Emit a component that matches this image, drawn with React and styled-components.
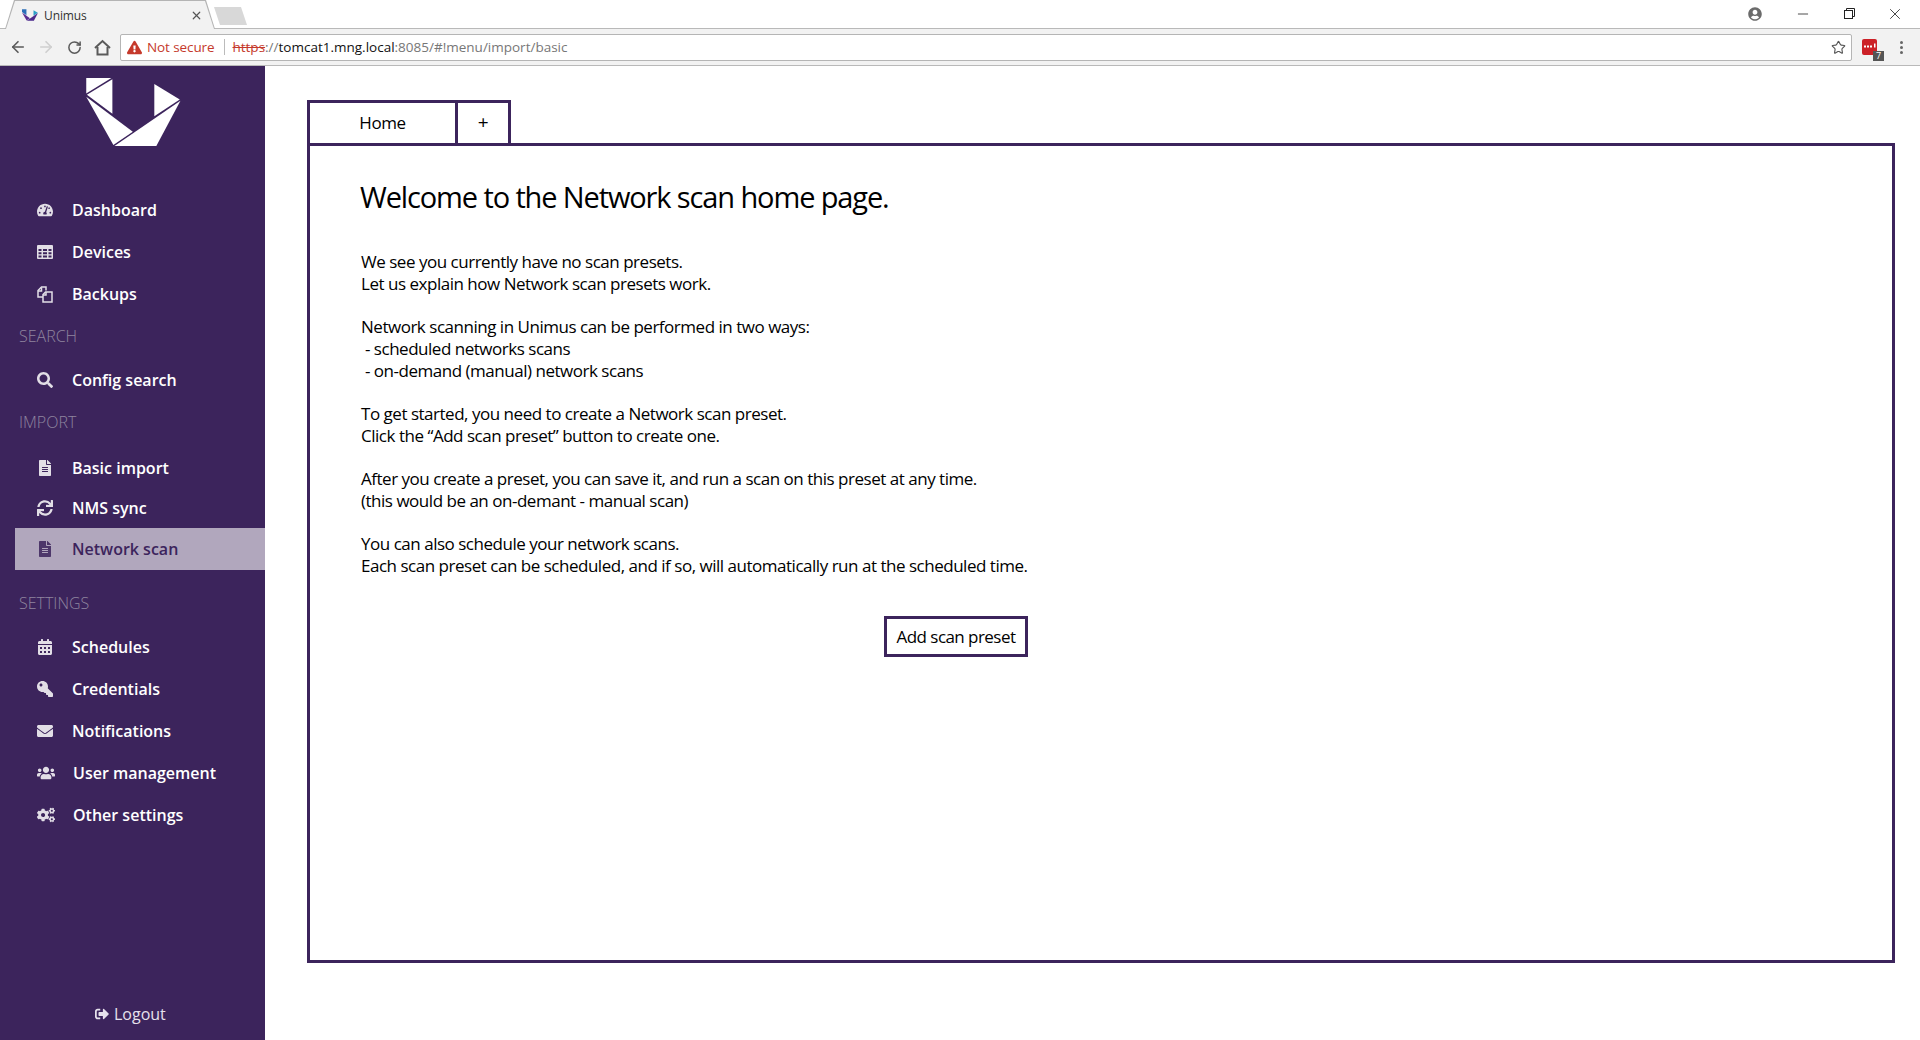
import styled, { createGlobalStyle } from 'styled-components';
import {
  FaTachometerAlt, FaSearch, FaFileAlt, FaSync, FaCalendarAlt,
  FaKey, FaEnvelope, FaUsers, FaCogs, FaSignOutAlt, FaExclamationTriangle, FaUserCircle,
} from 'react-icons/fa';
import { ArrowLeft, ArrowRight, RotateCw, Star, X, Minus } from 'lucide-react';

const purple = '#3c245c';

const GlobalStyle = createGlobalStyle`
  html, body { margin: 0; padding: 0; height: 100%; background: #fff; overflow: hidden; }
  * { box-sizing: border-box; }
  body { font-family: "Open Sans", "Liberation Sans", sans-serif; color: #000; }
`;

function Logo({ size = 95 }) {
  return (
    <svg width={size} height={size * 0.72} viewBox="79 54 282 204" fill="#fff">
      <polygon points="79,54 154,54 79,100" />
      <polygon points="157,58 157,161 81,104" />
      <polygon points="79,110 218,214 160,254" />
      <polygon points="282,72 358,118 282,168" />
      <polygon points="360,122 288,257 163,257" />
    </svg>
  );
}

function Favicon() {
  return (
    <svg width="16" height="12" viewBox="79 54 282 204">
      <polygon fill="#2b6fb8" points="79,54 157,54 157,161 79,104" />
      <polygon fill="#5a2d91" points="79,110 218,214 160,254" />
      <polygon fill="#2ba0c8" points="282,72 358,118 282,168" />
      <polygon fill="#4b2a8c" points="360,122 288,257 163,257" />
    </svg>
  );
}

function TableIcon() {
  return (
    <svg width="16" height="14" viewBox="0 0 16 14" fill="currentColor">
      <path fillRule="evenodd" d="M1 0h14a1 1 0 0 1 1 1v12a1 1 0 0 1-1 1H1a1 1 0 0 1-1-1V1a1 1 0 0 1 1-1zM1.5 4v2h3V4zm4.5 0v2h4V4zm5.500 0v2h3V4zM1.500 7.200v2h3v-2zm4.500 0v2h4v-2zm5.500 0v2h3v-2zM1.500 10.400v2h3v-2zm4.500 0v2h4v-2zm5.500 0v2h3v-2z" />
    </svg>
  );
}

function FilesIcon() {
  return (
    <svg width="16" height="17" viewBox="0 0 16 17" fill="none" stroke="currentColor" strokeWidth="1.5">
      <path d="M9 4.500V1H4.500L1 4.500V11H6" />
      <path d="M1 5H4.500V1.500" />
      <path d="M15 7V16H6V8.500L8.500 6H15Z" />
      <path d="M6 9H9V6" />
    </svg>
  );
}

function KeyIcon() {
  return <FlippedKey size={16} />;
}

function ExtensionGlyph() {
  return (
    <svg width="15" height="16" viewBox="0 0 15 16">
      <rect width="15" height="16" rx="2" fill="#cc2127" />
      <rect x="2" y="6.500" width="2" height="2" fill="#fff" />
      <rect x="5" y="6.500" width="2" height="2" fill="#fff" />
      <rect x="8" y="6.500" width="2" height="2" fill="#fff" />
      <rect x="12" y="4.500" width="1.500" height="4" fill="#fff" />
    </svg>
  );
}

function HomeGlyph() {
  return (
    <svg width="17" height="17" viewBox="0 0 17 17" fill="none" stroke="#5a5a5a" strokeWidth="2">
      <path d="M1 9L8.500 2L16 9" />
      <path d="M3.500 8V15.500H13.500V8" />
    </svg>
  );
}

const sections = [
  { items: [
    { icon: FaTachometerAlt, label: 'Dashboard' },
    { icon: TableIcon, label: 'Devices' },
    { icon: FilesIcon, label: 'Backups' },
  ] },
  { title: 'SEARCH', titleTop: 0, top: 2, items: [{ icon: FaSearch, label: 'Config search' }] },
  { title: 'IMPORT', titleTop: 0, top: 6, items: [
    { icon: FaFileAlt, label: 'Basic import', height: 38 },
    { icon: FaSync, label: 'NMS sync', height: 41 },
    { icon: FaFileAlt, label: 'Network scan', active: true },
  ] },
  { title: 'SETTINGS', titleTop: 12, top: 2, items: [
    { icon: FaCalendarAlt, label: 'Schedules' },
    { icon: KeyIcon, label: 'Credentials' },
    { icon: FaEnvelope, label: 'Notifications' },
    { icon: FaUsers, label: 'User management', shift: 1, iconSize: 18 },
    { icon: FaCogs, label: 'Other settings', shift: 1, iconSize: 18 },
  ] },
];

function App() {
  return (
    <Window>
      <GlobalStyle />
      <TabStrip>
        <Tab>
          <Favicon />
          <TabTitle>Unimus</TabTitle>
          <TabClose><X size={13} strokeWidth={2.2} /></TabClose>
        </Tab>
        <NewTab />
        <WindowControls>
          <ProfileBtn><FaUserCircle size={14} /></ProfileBtn>
          <WinBtn><Minus size={16} strokeWidth={1.2} /></WinBtn>
          <WinBtn>
            <svg width="11" height="11" viewBox="0 0 11 11" fill="none" stroke="#222" strokeWidth="1">
              <rect x="0.5" y="2.5" width="8" height="8" />
              <path d="M2.5 2.5V0.5H10.5V8.5H8.5" />
            </svg>
          </WinBtn>
          <WinBtn><X size={18} strokeWidth={1.1} /></WinBtn>
        </WindowControls>
      </TabStrip>

      <Toolbar>
        <NavBtn><ArrowLeft size={18} strokeWidth={2.2} color="#5a5a5a" /></NavBtn>
        <NavBtn><ArrowRight size={18} strokeWidth={2.2} color="#cfcfcf" /></NavBtn>
        <NavBtn><RotateCw size={15} strokeWidth={2.4} color="#5a5a5a" /></NavBtn>
        <NavBtn><HomeGlyph /></NavBtn>
        <Omnibox>
          <FaExclamationTriangle size={15} color="#c5392b" />
          <NotSecure>Not secure</NotSecure>
          <Separator />
          <Url>
            <Https>https</Https>://<strong>tomcat1.mng.local</strong>:8085/#!menu/import/basic
          </Url>
          <Star size={15} strokeWidth={1.8} color="#555" />
        </Omnibox>
        <Extension>
          <ExtensionGlyph />
          <ExtensionBadge>7</ExtensionBadge>
        </Extension>
        <MenuDots><i /><i /><i /></MenuDots>
      </Toolbar>

      <Page>
        <Sidebar>
          <LogoBox><Logo /></LogoBox>
          <Menu>
            {sections.map((section, i) => (
              <Section key={i}>
                {section.title && <SectionTitle $top={section.titleTop}>{section.title}</SectionTitle>}
                <Items $top={section.top}>
                  {section.items.map((item) => (
                    <MenuItem key={item.label} $active={item.active} $height={item.height}>
                      <MenuIcon><item.icon size={item.iconSize || 16} /></MenuIcon>
                      <MenuLabel $shift={item.shift}>{item.label}</MenuLabel>
                    </MenuItem>
                  ))}
                </Items>
              </Section>
            ))}
          </Menu>
          <Logout><FaSignOutAlt size={14} />Logout</Logout>
        </Sidebar>

        <Main>
          <Tabs>
            <HomeTab>Home</HomeTab>
            <PlusTab>+</PlusTab>
          </Tabs>
          <Frame>
            <Heading>Welcome to the Network scan home page.</Heading>
            <Intro>
              <Para>We see you currently have no scan presets.<br />Let us explain how Network scan presets work.</Para>
              <Para>Network scanning in Unimus can be performed in two ways:<br />&nbsp;- scheduled networks scans<br />&nbsp;- on-demand (manual) network scans</Para>
              <Para>To get started, you need to create a Network scan preset.<br />Click the “Add scan preset” button to create one.</Para>
              <Para>After you create a preset, you can save it, and run a scan on this preset at any time.<br />(this would be an on-demant - manual scan)</Para>
              <Para>You can also schedule your network scans.<br />Each scan preset can be scheduled, and if so, will automatically run at the scheduled time.</Para>
              <AddButton>Add scan preset</AddButton>
            </Intro>
          </Frame>
        </Main>
      </Page>
    </Window>
  );
}

const FlippedKey = styled(FaKey)`
  transform: scaleX(-1);
`;

const Window = styled.div`
  width: 1920px;
  height: 1040px;
  display: flex;
  flex-direction: column;
  overflow: hidden;
`;

const TabStrip = styled.div`
  height: 29px;
  display: flex;
  align-items: flex-start;
  background: #fff;
  border-bottom: 1px solid #b9b9b9;
`;

const Tab = styled.div`
  position: relative;
  width: 210px;
  height: 29px;
  margin-left: 5px;
  padding: 1px 0 0 17px;
  display: flex;
  align-items: center;
  background: #b4b4b4;
  clip-path: polygon(0 100%, 9px 0, 201px 0, 210px 100%);
  &::before {
    content: '';
    position: absolute;
    inset: 1px 1px 0;
    background: #f2f2f2;
    clip-path: polygon(0 100%, 9px 0, 199px 0, 208px 100%);
  }
  > * { position: relative; }
  svg { flex: none; }
`;

const TabTitle = styled.span`
  margin-left: 6px;
  font-size: 12px;
  color: #333;
  letter-spacing: -0.1px;
`;

const TabClose = styled.span`
  margin-left: 103px;
  display: flex;
  color: #555;
`;

const NewTab = styled.div`
  width: 33px;
  height: 18px;
  margin: 7px 0 0 -1px;
  background: #d8d8d8;
  clip-path: polygon(0 0, 27px 0, 33px 100%, 6px 100%);
`;

const WindowControls = styled.div`
  margin-left: auto;
  display: flex;
  align-items: center;
  height: 27px;
  margin-right: 2px;
`;

const ProfileBtn = styled.span`
  width: 47px;
  display: flex;
  justify-content: center;
  margin-right: 2px;
  color: #6b6b6b;
`;

const WinBtn = styled.span`
  width: 46px;
  display: flex;
  justify-content: center;
  color: #222;
`;

const Toolbar = styled.div`
  height: 37px;
  display: flex;
  align-items: center;
  padding: 0 0 0 4px;
  background: #f2f2f2;
  border-bottom: 1px solid #b9b9b9;
`;

const NavBtn = styled.span`
  width: 28px;
  display: flex;
  justify-content: center;
`;

const Omnibox = styled.div`
  width: 1732px;
  height: 27px;
  margin-left: 4px;
  padding: 0 5px 0 6px;
  display: flex;
  align-items: center;
  background: #fff;
  border: 1px solid #b5b5b5;
  border-radius: 2px;
`;

const NotSecure = styled.span`
  margin-left: 5px;
  font-size: 13.5px;
  color: #c5392b;
  letter-spacing: -0.1px;
`;

const Separator = styled.span`
  width: 1px;
  height: 16px;
  margin: 0 7px 0 10px;
  background: #bbb;
`;

const Url = styled.span`
  flex: 1;
  font-size: 13.5px;
  color: #777;
  strong { font-weight: 400; color: #111; }
`;

const Https = styled.span`
  color: #c5392b;
  text-decoration: line-through;
`;

const Extension = styled.div`
  position: relative;
  width: 15px;
  height: 16px;
  margin-left: 10px;
  svg { display: block; }
`;

const ExtensionBadge = styled.span`
  position: absolute;
  left: 11px;
  top: 12px;
  width: 11px;
  height: 10px;
  background: #555;
  color: #fff;
  font-size: 9px;
  line-height: 10px;
  text-align: center;
`;

const MenuDots = styled.span`
  margin-left: 23px;
  display: flex;
  flex-direction: column;
  gap: 2px;
  i { width: 3px; height: 3px; border-radius: 50%; background: #666; display: block; }
`;

const Page = styled.div`
  flex: 1;
  display: flex;
  min-height: 0;
`;

const Sidebar = styled.nav`
  width: 265px;
  flex: none;
  display: flex;
  flex-direction: column;
  background: ${purple};
`;

const LogoBox = styled.div`
  height: 123px;
  padding: 12px 0 0 86px;
`;

const Menu = styled.div`
  display: flex;
  flex-direction: column;
`;

const Section = styled.div``;

const SectionTitle = styled.div`
  height: 42px;
  margin-top: ${(p) => p.$top}px;
  padding-left: 19px;
  font-size: 16px;
  font-weight: 300;
  line-height: 42px;
  color: #8f849f;
`;

const Items = styled.div`
  margin-top: ${(p) => p.$top || 0}px;
`;

const MenuItem = styled.div`
  height: ${(p) => p.$height || 42}px;
  margin-left: ${(p) => (p.$active ? 15 : 0)}px;
  padding-left: ${(p) => (p.$active ? 22 : 37)}px;
  display: flex;
  align-items: center;
  background: ${(p) => (p.$active ? '#b1a7bd' : 'transparent')};
  color: ${(p) => (p.$active ? purple : '#fff')};
`;

const MenuIcon = styled.span`
  width: 35px;
  display: flex;
  opacity: 0.85;
`;

const MenuLabel = styled.span`
  margin-left: ${(p) => p.$shift || 0}px;
  font-size: 16px;
  font-weight: 600;
`;

const Logout = styled.div`
  margin: auto 0 15px 95px;
  display: flex;
  align-items: center;
  gap: 5px;
  font-size: 16px;
  line-height: 22px;
  color: #e6e1ec;
`;

const Main = styled.main`
  flex: 1;
  padding: 34px 25px 0 42px;
`;

const Tabs = styled.div`
  display: flex;
  height: 43px;
`;

const HomeTab = styled.div`
  width: 151px;
  height: 46px;
  padding-bottom: 2px;
  display: flex;
  align-items: center;
  justify-content: center;
  background: #fff;
  border: 3px solid ${purple};
  font-size: 17px;
  letter-spacing: -0.4px;
`;

const PlusTab = styled(HomeTab)`
  width: 56px;
  margin-left: -3px;
  font-size: 19px;
`;

const Frame = styled.section`
  height: 820px;
  padding: 31px 0 0 50px;
  border: 3px solid ${purple};
`;

const Heading = styled.h1`
  margin: 0;
  font-size: 29px;
  font-weight: 400;
  line-height: 40px;
  letter-spacing: -1.12px;
`;

const Intro = styled.div`
  width: 667px;
  margin: 34px 0 0 1px;
  display: flex;
  flex-direction: column;
`;

const Para = styled.p`
  margin: 0 0 21.7px;
  font-size: 17px;
  line-height: 21.7px;
  letter-spacing: -0.48px;
  white-space: nowrap;
`;

const AddButton = styled.button`
  align-self: flex-end;
  width: 144px;
  height: 41px;
  margin-top: 18px;
  padding: 0;
  background: #fff;
  border: 3px solid ${purple};
  font-family: inherit;
  font-size: 17px;
  letter-spacing: -0.55px;
  color: #000;
`;

export default App;
